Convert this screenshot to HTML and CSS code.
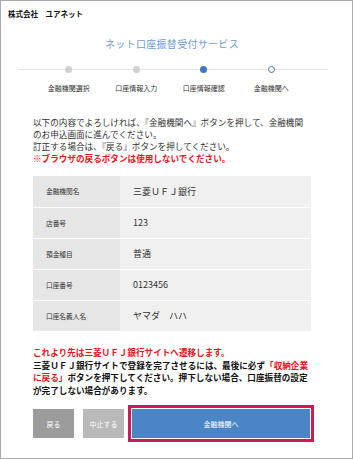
FILE: index.html
```html
<!DOCTYPE html>
<html lang="ja">
<head>
    <meta charset="UTF-8">
    <title>ネット口座振替受付サービス</title>
    <link rel="stylesheet" href="styles.css">
</head>
<body>
<div class="frame">
    <header class="company">株式会社　ユアネット</header>
    <main class="content">
        <h1 class="title">ネット口座振替受付サービス</h1>

        <!-- progress -->
        <div class="steps">
            <div class="step done"><span class="dot"></span><p>金融機関選択</p></div>
            <div class="step done"><span class="dot"></span><p>口座情報入力</p></div>
            <div class="step current"><span class="dot"></span><p>口座情報確認</p></div>
            <div class="step next"><span class="dot"></span><p>金融機関へ</p></div>
        </div>

        <p class="intro">
            以下の内容でよろしければ、『金融機関へ』ボタンを押して、金融機関のお申込画面に進んでください。<br>
            訂正する場合は、『戻る』ボタンを押してください。<br>
            <strong class="red">※ブラウザの戻るボタンは使用しないでください。</strong>
        </p>

        <table class="confirm">
            <tr><th>金融機関名</th><td>三菱ＵＦＪ銀行</td></tr>
            <tr><th>店番号</th><td>123</td></tr>
            <tr><th>預金種目</th><td>普通</td></tr>
            <tr><th>口座番号</th><td>0123456</td></tr>
            <tr><th>口座名義人名</th><td>ヤマダ　ハハ</td></tr>
        </table>

        <p class="notice">
            <span class="red">これより先は三菱ＵＦＪ銀行サイトへ遷移します。</span><br>
            三菱ＵＦＪ銀行サイトで登録を完了させるには、最後に必ず<span class="red">「収納企業<br>に戻る」</span>ボタンを押下してください。押下しない場合、口座振替の設定<br>が完了しない場合があります。
        </p>

        <div class="buttons">
            <button class="btn back">戻る</button>
            <button class="btn cancel">中止する</button>
            <button class="btn go">金融機関へ</button>
        </div>
    </main>
</div>
</body>
</html>
```

FILE: styles.css
```css
/* General */
body {
    margin: 0;
    font-family: "Noto Sans CJK JP", "Noto Sans", sans-serif;
    color: #333;
    background: #fff;
}

.frame {
    width: 353px;
    height: 459px;
    box-sizing: border-box;
    border: 1px solid #aaa;
}

.company {
    padding: 8px 0 0 7px;
    font-size: 7.5px;
    line-height: 10px;
    font-weight: bold;
    color: #111;
}

.content {
    padding: 0 41px 0 32px;
}

.title {
    margin: 18px 0 0;
    font-size: 10px;
    line-height: 14px;
    font-weight: normal;
    text-align: center;
    letter-spacing: 0.3px;
    color: #6c9cd2;
}

/* Progress */
.steps {
    position: relative;
    display: flex;
    margin-top: 15px;
    padding-left: 2px;
}

.steps::before {
    content: "";
    position: absolute;
    top: 3px;
    left: -15px;
    right: -17px;
    height: 1px;
    background: #e3e3e3;
}

.step {
    position: relative;
    width: 67.5px;
    text-align: center;
}

.dot {
    display: block;
    width: 7px;
    height: 7px;
    margin: 0 auto;
    border-radius: 50%;
    box-sizing: border-box;
    background: #cfcfcf;
}

.current .dot {
    background: #3f7ac0;
}

.next .dot {
    background: #fff;
    border: 1px solid #3f7ac0;
}

.step p {
    margin: 10px 0 0;
    font-size: 7px;
    line-height: 10px;
    white-space: nowrap;
}

/* Texts */
.intro {
    margin: 23px 0 0;
    font-size: 8.6px;
    line-height: 12px;
}

.red {
    color: #e8141b;
    font-weight: bold;
}

/* Table */
.confirm {
    width: 100%;
    margin-top: 12px;
    border-collapse: collapse;
}

.confirm tr + tr {
    border-top: 1px solid #fff;
}

.confirm th,
.confirm td {
    height: 31px;
    padding: 0 0 0 13px;
    text-align: left;
    box-sizing: border-box;
}

.confirm th {
    width: 87px;
    font-size: 6.7px;
    font-weight: normal;
    background: #e6e6e6;
}

.confirm td {
    font-size: 9px;
    background: #f0f0f0;
}

.notice {
    margin: 15px 0 0;
    font-size: 8.6px;
    line-height: 12.5px;
    font-weight: bold;
    color: #111;
}

/* Buttons */
.buttons {
    display: flex;
    margin-top: 13px;
}

.btn {
    height: 29px;
    border: none;
    padding: 0;
    font-family: inherit;
    font-size: 7px;
    color: #fff;
}

.back {
    width: 41px;
    background: #9c9c9c;
}

.cancel {
    width: 41px;
    margin-left: 9px;
    background: #b9b9b9;
}

.go {
    width: 178px;
    margin-left: 8px;
    background: #4a86c6;
    outline: 3px solid #c71d5a;
    outline-offset: 1px;
}
```
